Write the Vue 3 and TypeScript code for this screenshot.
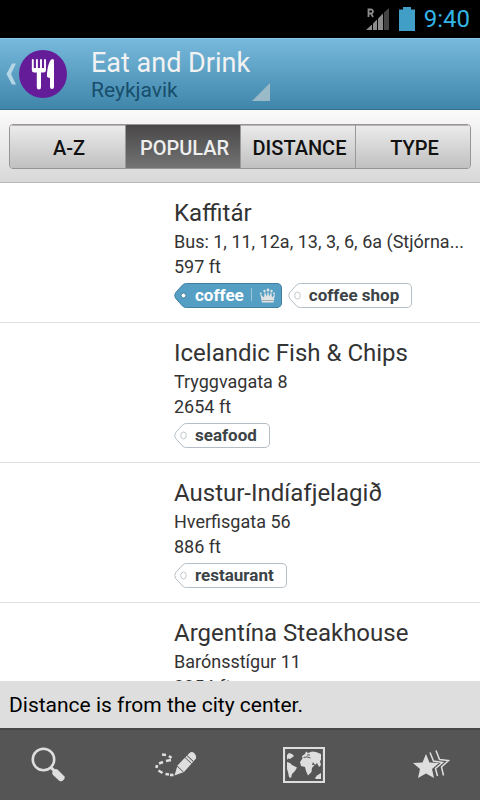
<script setup lang="ts">
import { ref } from 'vue'

interface Tag {
  label: string
  top?: boolean
}

interface Place {
  name: string
  address: string
  distance: string
  tags: Tag[]
}

const sorts: string[] = ['A-Z', 'POPULAR', 'DISTANCE', 'TYPE']
const active = ref<string>('POPULAR')

const places: Place[] = [
  {
    name: 'Kaffitár',
    address: 'Bus: 1, 11, 12a, 13, 3, 6, 6a (Stjórna...',
    distance: '597 ft',
    tags: [{ label: 'coffee', top: true }, { label: 'coffee shop' }],
  },
  { name: 'Icelandic Fish & Chips', address: 'Tryggvagata 8', distance: '2654 ft', tags: [{ label: 'seafood' }] },
  { name: 'Austur-Indíafjelagið', address: 'Hverfisgata 56', distance: '886 ft', tags: [{ label: 'restaurant' }] },
  { name: 'Argentína Steakhouse', address: 'Barónsstígur 11', distance: '2254 ft', tags: [] },
]
</script>

<template>
  <div class="screen">
    <div class="status">
      <svg class="signal" width="24" height="24" viewBox="0 0 24 24" aria-hidden="true">
        <path d="M2.500 10V2.500H5a2 2 0 0 1 0 4H2.500M5 6.500L7 10" fill="none" stroke="#8c8c8c" stroke-width="1.800" />
        <path d="M0 23L6 17.500V23z" fill="#8c8c8c" />
        <path d="M7 16.500L11 12.500V23H7z" fill="#8c8c8c" />
        <path d="M12 11.500L17 6.500V23H12z" fill="#8c8c8c" />
        <path d="M18 5.500L23 1V23H18z" fill="#444" />
      </svg>
      <svg class="battery" width="16" height="24" viewBox="0 0 16 24" aria-hidden="true">
        <path d="M0 2.500H4V0H12V2.500H16V24H0z" fill="#419fc7" />
      </svg>
      <span class="clock">9:40</span>
    </div>

    <header class="bar">
      <button class="back" type="button" aria-label="Back">
        <svg width="10" height="22" viewBox="0 0 10 22">
          <path d="M6 0.500H10L5 11L10 21.500H6L0.500 11z" fill="#b5d6e6" />
        </svg>
        <svg width="48" height="48" viewBox="0 0 48 48">
          <circle cx="24" cy="24" r="24" fill="#651c99" />
          <path
            d="M13.800 10V19M17.900 10V19M22 10V19M26 10V19"
            fill="none"
            stroke="#fff"
            stroke-width="1.900"
            stroke-linecap="round"
          />
          <path d="M12.900 18H26.900V20.500Q26.900 22.500 24.500 22.500H22V37Q22 39.500 19.900 39.500T17.800 37V22.500H15.300Q12.900 22.500 12.900 20.500z" fill="#fff" />
          <path d="M35 10.500q0-1.500-1.500-1.500c-3 0-5.500 9-5.500 17q0 1 1 1.500l2 .5v9q0 2 2 2t2-2z" fill="#fff" />
        </svg>
      </button>
      <button class="place" type="button">
        <span class="titles">
          <span class="title">Eat and Drink</span>
          <span class="city">Reykjavik</span>
        </span>
        <svg class="corner" width="18" height="18" viewBox="0 0 18 18" aria-hidden="true">
          <path d="M18 0V18H0z" fill="#9bbac7" />
        </svg>
      </button>
    </header>

    <nav class="sorts">
      <div class="segments">
        <button
          v-for="sort in sorts"
          :key="sort"
          type="button"
          class="segment"
          :class="{ on: sort === active }"
          :aria-pressed="sort === active"
          @click="active = sort"
        >
          {{ sort }}
        </button>
      </div>
    </nav>

    <ul class="list">
      <li v-for="place in places" :key="place.name" class="row">
        <h2 class="name">{{ place.name }}</h2>
        <p class="line">{{ place.address }}</p>
        <p class="line">{{ place.distance }}</p>
        <div class="tags">
          <span v-for="tag in place.tags" :key="tag.label" class="tag" :class="{ top: tag.top }">
            <svg class="tip" width="14" height="25" viewBox="0 0 14 25" aria-hidden="true">
              <path
                class="edge"
                d="M14 0.500H12.500Q10 0.500 8.500 2L1.800 9.500Q-0.500 12.500 1.800 15.500L8.500 23Q10 24.500 12.500 24.500H14"
              />
              <circle v-if="tag.top" class="hole" cx="9.500" cy="12.500" r="2.500" />
              <ellipse v-else class="hole" cx="9.500" cy="12.500" rx="2.800" ry="3.500" />
            </svg>
            <span class="label">
              {{ tag.label }}
              <svg v-if="tag.top" class="crown" width="24" height="15" viewBox="0 0 24 15" aria-hidden="true">
                <path d="M.5 0V13" stroke="#9cc6da" />
                <path
                  d="M11 14.500L9.300 6L13 9.500L13.800 3.500L15.800 8.500L17 2.500L18.200 8.500L20.200 3.500L21 9.500L24 6L22.500 14.500z"
                  fill="#e1e3e4"
                />
                <g fill="#e1e3e4">
                  <circle cx="9.800" cy="5.500" r="1" />
                  <circle cx="13.500" cy="3" r="1.200" />
                  <circle cx="17" cy="2" r="1.400" />
                  <circle cx="20.500" cy="3" r="1.200" />
                  <circle cx="23" cy="5.500" r="1" />
                </g>
                <path d="M11 12.500H22.500" stroke="#8f9da4" stroke-width=".8" />
              </svg>
            </span>
          </span>
        </div>
      </li>
    </ul>

    <p class="notice">Distance is from the city center.</p>

    <footer class="tools">
      <button type="button" aria-label="Search">
        <svg width="42" height="42" viewBox="0 0 42 42">
          <circle cx="16.500" cy="15.500" r="10.700" fill="none" stroke="#dedede" stroke-width="2.600" />
          <path d="M23.500 23L27.500 27" stroke="#dedede" stroke-width="3" />
          <path d="M25.500 27.500Q28 24 30.500 25.500L37.500 32.500Q38.500 34 36.500 36T32.500 37L26 31Q24.500 29.500 25.500 27.500z" fill="#dedede" />
        </svg>
      </button>
      <button type="button" aria-label="Draw route">
        <svg width="42" height="42" viewBox="0 0 42 42">
          <path d="M7 10.500L11 11M14 12L16.500 14M16 16L11 17M8 18L4 19.500M2 21L1.500 24M3.500 26.500L7.500 29M10.500 30L14 30.500" fill="none" stroke="#dedede" stroke-width="2.600" />
          <path d="M15 31H18.500" fill="none" stroke="#dedede" stroke-width="2.600" />
          <path d="M19.500 31.500L22.500 21.500L31.500 12L38 18L29 28z" fill="#dedede" />
          <path d="M31.500 12L34.500 9Q37 7 39.500 9.500T41 14.500L38 18z" fill="#dedede" />
          <path d="M31.500 11L38.500 17.500M29.500 13L36.500 19.500M22 22L28.500 28" stroke="#555" stroke-width="1" />
        </svg>
      </button>
      <button type="button" aria-label="Map">
        <svg width="42" height="36" viewBox="0 0 42 36">
          <path d="M1 1H41V35H1z" fill="none" stroke="#dedede" stroke-width="2.200" />
          <path
            d="M4 8L6 6L9 7L11 9L9 10.500L7 12L5 11.500L4 13zM4 15L7 16L9 18L14 20.500L12 24L9 27L8 31L6 30L5 25L4 22z"
            fill="#dedede"
          />
          <path
            d="M17 15L19.500 11.500L19 9L22 7L23 4.500L25 6L29 4.500L33 5L38 7V13L37 14L38 18L36 20L34 16L32 18L30 15L29 18L31.500 18L29 21L28.500 25L25 28.500L23 24L22 20L18 19z"
            fill="#dedede"
          />
          <path d="M20.500 10.500Q24 9 27.500 11M24 8L27 8" fill="none" stroke="#555" stroke-width="1" />
          <path d="M32 31L34 28.500L38 26V32H33z" fill="#dedede" />
        </svg>
      </button>
      <button type="button" aria-label="Favorites">
        <svg width="42" height="42" viewBox="0 0 42 42">
          <path d="M15 10L18.500 18.500L28 19L21 25L23 34L15 29.500L7 34L9 25L2 19L11.500 18.500z" fill="#dedede" />
          <path
            d="M19 8.500L22.500 17L31.500 18.500L24.500 24.500L26.500 32M25 6.500L28.500 15.500L37.500 16.500L30.500 23L32.500 31.500"
            fill="none"
            stroke="#dedede"
            stroke-width="1.500"
          />
        </svg>
      </button>
    </footer>
  </div>
</template>

<style>
body {
  margin: 0;
}
</style>

<style scoped>
.screen {
  display: flex;
  flex-direction: column;
  height: 100vh;
  overflow: hidden;
  background: #fff;
  color: #333;
  font-family: Roboto, 'Noto Sans', sans-serif;
}

button {
  margin: 0;
  padding: 0;
  border: 0;
  background: none;
  color: inherit;
  font: inherit;
}

svg {
  display: block;
  flex: none;
}

.status {
  display: flex;
  flex: none;
  align-items: center;
  justify-content: flex-end;
  gap: 9px;
  height: 38px;
  padding-right: 10px;
  box-sizing: border-box;
  background: #000;
}

.clock {
  color: #33b5e5;
  font-size: 24px;
  line-height: 38px;
}

.bar {
  display: flex;
  flex: none;
  align-items: stretch;
  gap: 24px;
  height: 72px;
  padding-left: 6px;
  box-sizing: border-box;
  border-top: 1px solid #8ac5e2;
  border-bottom: 1px solid #336f8e;
  background: linear-gradient(#77b9dc, #3f86aa);
}

.back {
  display: flex;
  align-items: center;
  gap: 3px;
}

.place {
  display: flex;
  align-items: flex-end;
  gap: 2px;
  padding-bottom: 8px;
  text-align: left;
}

.titles {
  display: flex;
  flex-direction: column;
}

.title {
  color: #f2f2f2;
  font-size: 27px;
  line-height: 32px;
}

.city {
  color: #174e6c;
  font-size: 21px;
  line-height: 22px;
}

.sorts {
  flex: none;
  padding: 14px 9px 13px;
  border-bottom: 1px solid #b8b8b8;
  background: linear-gradient(#fbfbfb, #d8d8d8);
}

.segments {
  display: grid;
  grid-template-columns: repeat(4, 1fr);
  height: 45px;
  box-sizing: border-box;
  overflow: hidden;
  border: 1px solid #999494;
  border-radius: 4px;
}

.segment {
  padding: 2px 0 0 3px;
  border-left: 1px solid #999;
  background: linear-gradient(#ececec, #c0c0c0);
  box-shadow: inset 0 1px #bcb6b6;
  color: #111;
  font-size: 20px;
  font-weight: 500;
}

.segment:first-child {
  border-left: 0;
}

.segment.on {
  background: linear-gradient(#4a4848, #737373);
  box-shadow: none;
  color: #eee;
}

.list {
  flex: 1;
  min-height: 0;
  margin: 0;
  padding: 0;
  overflow: hidden;
  list-style: none;
}

.row {
  height: 140px;
  padding: 14px 16px 0 174px;
  box-sizing: border-box;
  border-bottom: 1px solid #dfdfdf;
}

.name {
  margin: 0;
  font-size: 24px;
  font-weight: 400;
  line-height: 32px;
}

.line {
  margin: 0;
  overflow: hidden;
  font-size: 18px;
  line-height: 25px;
  white-space: nowrap;
}

.tags {
  display: flex;
  gap: 6px;
  margin-top: 4px;
}

.tag {
  display: flex;
  color: #3c4447;
  font-size: 17px;
  font-weight: 700;
}

.edge {
  fill: #fff;
  stroke: #b4bec4;
}

.hole {
  fill: #fff;
  stroke: #c2c8cb;
}

.label {
  display: flex;
  align-items: center;
  gap: 7px;
  height: 25px;
  padding: 0 12px 0 7px;
  box-sizing: border-box;
  border: 1px solid #b4bec4;
  border-left: 0;
  border-radius: 0 5px 5px 0;
  line-height: 23px;
}

.top .edge {
  fill: #559fc4;
  stroke: #427f9f;
}

.top .hole {
  fill: #fff;
  stroke: #427f9f;
}

.top .label {
  padding-right: 6px;
  border-color: #427f9f;
  background: #559fc4;
  color: #fff;
}

.notice {
  flex: none;
  margin: 0;
  padding: 1px 9px 0;
  background: #dedede;
  color: #000;
  font-size: 21px;
  line-height: 46px;
}

.tools {
  display: flex;
  flex: none;
  align-items: center;
  justify-content: space-between;
  height: 72px;
  padding: 0 27px;
  box-sizing: border-box;
  border-top: 2px solid #474747;
  background: #555;
}
</style>
